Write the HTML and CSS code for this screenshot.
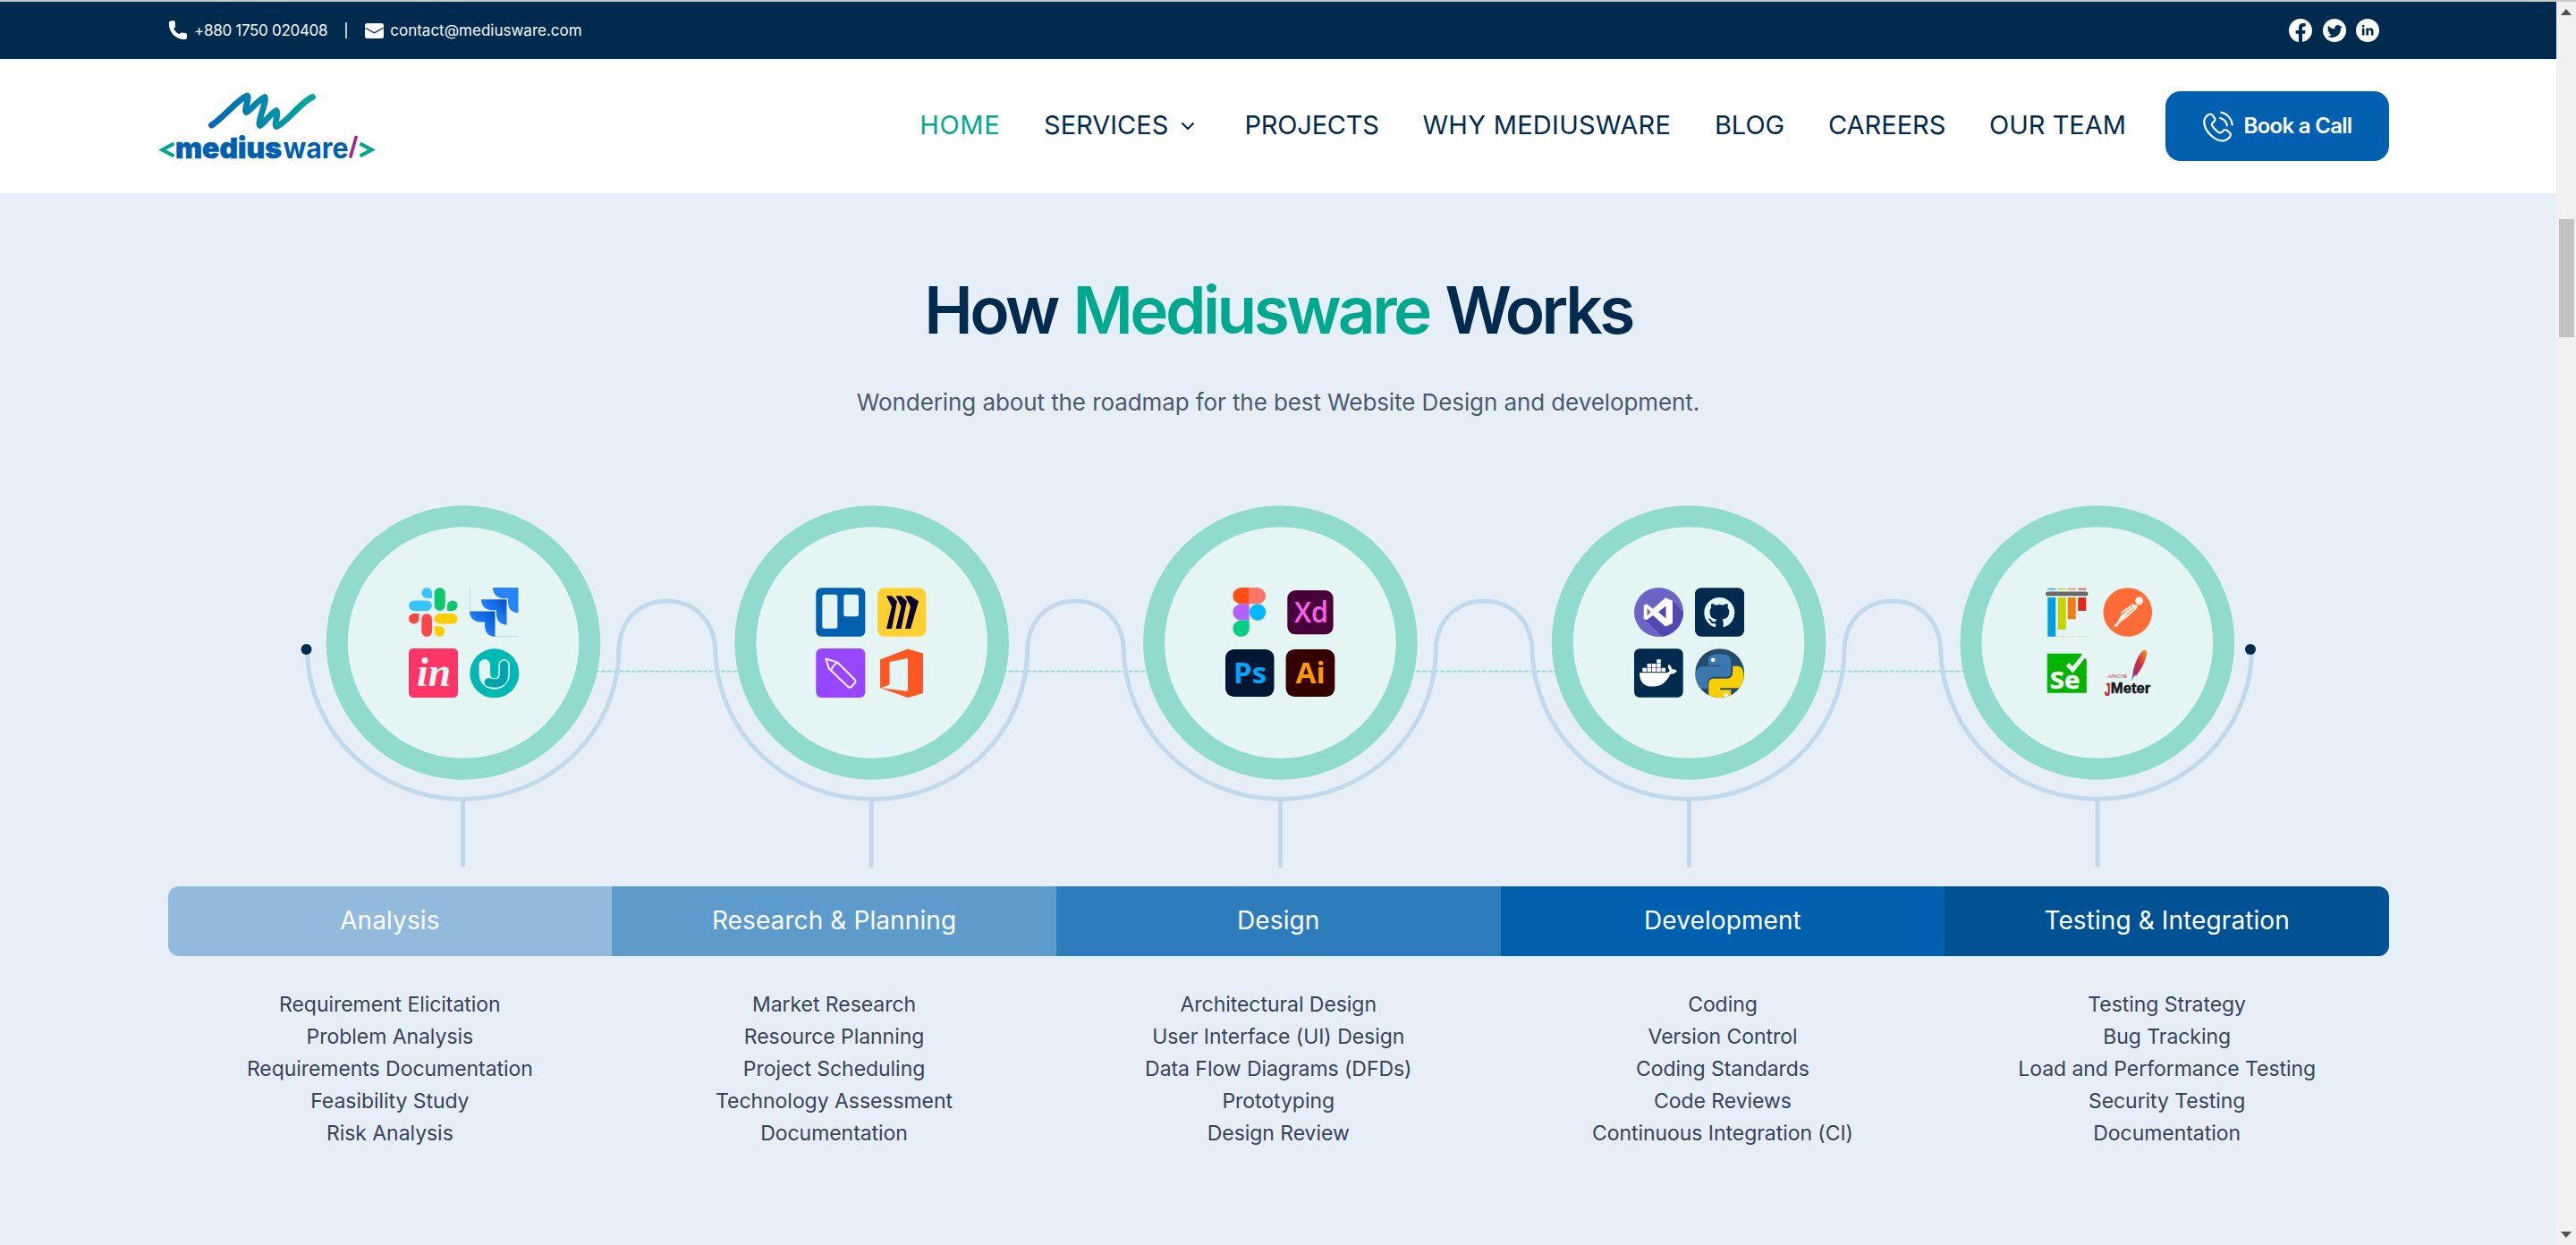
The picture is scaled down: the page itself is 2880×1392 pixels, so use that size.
FILE: index.html
```html
<!DOCTYPE html>
<html lang="en">
<head>
<meta charset="utf-8">
<title>Mediusware</title>
<link rel="stylesheet" href="styles.css">
</head>
<body>
<div class="window">
<div class="page">
  <div class="topbar">
    <div class="contacts">
      <svg class="icon-phone" viewBox="0 0 22 22"><path fill="#fff" d="M1 2Q.8.7 3 .4L6 0Q7.500 0 7.700 2L8 6.500Q8 8 6 9Q8 13 12.500 15.300Q13.500 13.500 15 13.600L19.500 14Q21 14.200 21 16V19Q21 20.800 19 21C8 21.500 0 12 1 2Z"/></svg>
      <span class="phone">+880 1750 020408</span>
      <span class="divider"></span>
      <svg class="icon-mail" viewBox="0 0 21 17"><rect width="21" height="17" rx="2.500" fill="#fff"/><path d="M.5 5.200 10.500 10.800 20.500 5.200" fill="none" stroke="#002b4e" stroke-width="1.300"/></svg>
      <span class="mail">contact@mediusware.com</span>
    </div>
    <div class="socials">
      <svg viewBox="0 0 16 16"><path fill="#fff" d="M16 8.049c0-4.446-3.582-8.050-8-8.050C3.580 0-.002 3.603-.002 8.050c0 4.017 2.926 7.347 6.750 7.951v-5.625h-2.030V8.050H6.750V6.275c0-2.017 1.195-3.131 3.022-3.131.876 0 1.791.157 1.791.157v1.980h-1.009c-.993 0-1.303.621-1.303 1.258v1.510h2.218l-.354 2.326H9.250V16c3.824-.604 6.750-3.934 6.750-7.951"/></svg>
      <svg viewBox="0 0 16 16"><circle cx="8" cy="8" r="8" fill="#fff"/><path transform="translate(3 3.100) scale(.65)" fill="#002b4e" d="M5.026 15c6.038 0 9.341-5.003 9.341-9.334q.002-.211-.006-.422A6.700 6.700 0 0 0 16 3.542a6.700 6.700 0 0 1-1.889.518 3.300 3.300 0 0 0 1.447-1.817 6.500 6.500 0 0 1-2.087.793A3.286 3.286 0 0 0 7.875 6.030a9.320 9.320 0 0 1-6.767-3.429 3.290 3.290 0 0 0 1.018 4.382A3.300 3.300 0 0 1 .64 6.575v.045a3.290 3.290 0 0 0 2.632 3.218 3.200 3.200 0 0 1-.865.115 3 3 0 0 1-.614-.057 3.280 3.280 0 0 0 3.067 2.277A6.600 6.600 0 0 1 .78 13.580a6 6 0 0 1-.78-.045A9.340 9.340 0 0 0 5.026 15"/></svg>
      <svg viewBox="0 0 16 16"><circle cx="8" cy="8" r="8" fill="#fff"/><path fill="#002b4e" d="M4.200 6.500H5.800V11.400H4.200ZM5 4.100a.9.900 0 1 1 0 1.800a.9.900 0 1 1 0-1.800ZM7 6.500H8.500V7.200C9.400 5.900 12 6 12 8.500V11.400H10.400V8.800C10.400 7.300 8.600 7.400 8.600 8.800V11.400H7Z"/></svg>
    </div>
  </div>

  <header class="header">
    <svg class="logo" viewBox="0 -4 242 90">
      <defs><linearGradient id="mark" gradientUnits="userSpaceOnUse" x1="56" y1="0" x2="175" y2="0"><stop offset="0" stop-color="#0066b6"/><stop offset="1" stop-color="#00ab9f"/></linearGradient></defs>
      <path fill="none" stroke="url(#mark)" stroke-width="6.800" stroke-linecap="round" stroke-linejoin="round" d="M58.500 40C72 32 86 12 98.500 7C101.500 9 94 24 97.500 25.500C103 23 110 12 118 8.500C121 12 109 38 112.500 40.500C117 39 124 27 131 23.500C134 26 128 40 131 41.500C142 38 158 14 171.500 8.500"/>
      <g font-family="Inter, sans-serif" font-size="32">
        <path d="M16.500 60.500 3.500 67.500 16.500 74.500" fill="none" stroke="#00a88f" stroke-width="4.200"/>
        <text x="18" y="76.500" font-weight="900" fill="#005fb0" stroke="#005fb0" stroke-width=".6" textLength="119" lengthAdjust="spacingAndGlyphs">medius</text>
        <text x="138.500" y="76.500" font-weight="700" fill="#005fb0" textLength="73" lengthAdjust="spacingAndGlyphs">ware</text>
        <path d="M213.500 76.500 220.500 52" fill="none" stroke="#a02890" stroke-width="3.600"/>
        <path d="M224.500 60.500 237.500 67.500 224.500 74.500" fill="none" stroke="#00a88f" stroke-width="4.200"/>
      </g>
    </svg>
    <nav class="nav">
      <a class="active">HOME</a>
      <a class="has-menu">SERVICES<svg viewBox="0 0 16 10"><path d="M1.500 1.500 8 8 14.500 1.500" fill="none" stroke="#002b4e" stroke-width="2.200"/></svg></a>
      <a class="projects">PROJECTS</a>
      <a class="why">WHY MEDIUSWARE</a>
      <a>BLOG</a>
      <a>CAREERS</a>
      <a>OUR TEAM</a>
    </nav>
    <a class="call">
      <svg viewBox="0 0 34 35"><g fill="none" stroke="#fff" stroke-width="2.200" stroke-linecap="round" stroke-linejoin="round"><path d="M8.500 3.500C5.500 3.500 1.200 7.500 1.200 12C1.200 22 12.500 33.500 22 33.500C26.500 33.500 31 29 31 26.500C31 25 26.500 21 24.500 21C22.500 21 21.500 24.500 19.500 24.500C16.500 24.500 9.800 17.500 9.800 15C9.800 13 13.500 12.200 13.500 10C13.500 8 10 3.500 8.500 3.500Z"/><path d="M19 8C23.500 9 26 12 27 16.500M20 1.500C27 3 31.500 8 32.800 15.500"/></g></svg>
      <span>Book a Call</span>
    </a>
  </header>

  <main class="works">
    <h1>How <em>Mediusware</em> Works</h1>
    <p class="lead">Wondering about the roadmap for the best Website Design and development.</p>

    <svg class="roadmap" viewBox="0 560 2858 431">
      <defs>
        <linearGradient id="jira" x1="1" y1="0" x2=".35" y2=".65"><stop offset="0" stop-color="#0050c8"/><stop offset="1" stop-color="#2684ff"/></linearGradient>
        <linearGradient id="feather" x1="1" y1="0" x2="0" y2="1"><stop offset="0" stop-color="#f7a11b"/><stop offset=".45" stop-color="#d02a40"/><stop offset="1" stop-color="#7a3a98"/></linearGradient>
        <clipPath id="disc"><circle cx="27.500" cy="27.500" r="27.500"/></clipPath>
      </defs>
      <path d="M518 750.700H2345" stroke="#8fdccb" stroke-width="1.800" stroke-dasharray="5 1.700"/>
      <g fill="none" stroke="#c2d9ec" stroke-width="5">
        <path d="M343.500 727C345 822 424 893.500 518 893.500C612 893.500 692 822 692 724C694 692 716 672 745.700 672C775 672 797 692 799.500 724C801 822 881 893.500 974.700 893.500C1069 893.500 1148.700 822 1148.700 724C1150.700 692 1172.700 672 1202.400 672C1231.700 672 1253.700 692 1256.200 724C1257.700 822 1337.700 893.500 1431.400 893.500C1525.700 893.500 1605.400 822 1605.400 724C1607.400 692 1629.400 672 1659.100 672C1688.400 672 1710.400 692 1712.900 724C1714.400 822 1794.400 893.500 1888.100 893.500C1982.400 893.500 2062.100 822 2062.100 724C2064.100 692 2086.100 672 2115.800 672C2145.100 672 2167.100 692 2169.600 724C2171.100 822 2251.100 893.500 2344.800 893.500C2438 893.500 2516 822 2517.500 727"/>
        <path stroke-linecap="round" d="M517.500 895V967.500M974 895V967.500M1431.500 895V967.500M1888.500 895V967.500M2345 895V967.500"/>
      </g>
      <circle cx="342.500" cy="726" r="6" fill="#002b4e"/><circle cx="2516" cy="726" r="6" fill="#002b4e"/>
      <g fill="#e5f5f4" stroke="#90dbce" stroke-width="24">
        <circle cx="518" cy="718.500" r="141.300"/><circle cx="974.700" cy="718.500" r="141.300"/><circle cx="1431.400" cy="718.500" r="141.300"/><circle cx="1888.100" cy="718.500" r="141.300"/><circle cx="2344.800" cy="718.500" r="141.300"/>
      </g>

      <!-- Slack -->
      <g transform="translate(457 657)">
        <path fill="#36c5ff" d="M26 11.700H20.100A5.850 5.850 0 1 1 26 5.850ZM5.800 14.600H20.200a5.700 5.700 0 0 1 0 11.400H5.800a5.700 5.700 0 0 1 0-11.400Z"/>
        <path fill="#10c66f" d="M28.700 6a6 6 0 0 1 12 0V20a6 6 0 0 1-12 0ZM43 26V20.300A5.800 5.800 0 1 1 48.800 26Z"/>
        <path fill="#ff4545" d="M11.500 29V34.700A5.750 5.750 0 1 1 5.750 29ZM14.300 35a5.850 5.850 0 0 1 11.700 0V49a5.850 5.850 0 0 1-11.700 0Z"/>
        <path fill="#fc0" d="M34.400 29H48.800a5.700 5.700 0 0 1 0 11.500H34.400a5.700 5.700 0 0 1 0-11.500ZM28.700 43.300H34.500A5.750 5.750 0 1 1 28.700 49Z"/>
      </g>
      <!-- Jira -->
      <g transform="translate(525 657)">
        <path d="M.5 0V26M28 54.500H54.500" stroke="#b5d8f2" stroke-width="1"/>
        <path fill="#2684ff" d="M26 0H54.500V28.500C47 28 43 23 43 16V12H38C31 12 26 7 26 0Z"/>
        <path transform="translate(-13 13.300)" fill="url(#jira)" d="M26 0H54.500V28.500C47 28 43 23 43 16V12H38C31 12 26 7 26 0Z"/>
        <path transform="translate(-26 26.500)" fill="url(#jira)" d="M26 0H54.500V28.500C47 28 43 23 43 16V12H38C31 12 26 7 26 0Z"/>
      </g>
      <!-- InVision -->
      <g transform="translate(457 725)"><rect width="55" height="55" rx="5" fill="#ff3568"/><text x="9" y="42" textLength="38" lengthAdjust="spacingAndGlyphs" font-family="Liberation Serif, serif" font-style="italic" font-weight="700" font-size="46" fill="#e5f5f4">in</text></g>
      <!-- UpLabs -->
      <g transform="translate(525.300 725.300)" fill="none" stroke-linecap="round"><circle cx="27.500" cy="27.500" r="27.500" fill="#00b9b3"/><path stroke="#e5f5f4" stroke-width="12.500" d="M16.500 18V28C16.500 43 38.300 43 38.300 28V18"/><path stroke="#00b9b3" stroke-width="9.500" d="M38.300 18V28C38.300 39 30 40 21 37.500"/><path stroke="#00a3a8" stroke-width="8" d="M38.300 18V28C38.300 39 30 40 21 37.500"/></g>
      <!-- Trello -->
      <g transform="translate(912.300 657.300)"><rect width="55" height="54.500" rx="6" fill="#0060b0"/><rect x="7" y="7.500" width="17" height="38" rx="2.500" fill="#e5f5f4"/><rect x="31" y="7.500" width="16.700" height="24.500" rx="2.500" fill="#e5f5f4"/></g>
      <!-- Miro -->
      <g transform="translate(981 657.300)"><rect width="54.500" height="54.500" rx="8" fill="#ffd02f"/><path fill="#0a0038" d="M10 9H16L22 15 16 45.700H10L16 21ZM20.500 9H26.500L33 15 26.500 45.700H20.500L26.500 21ZM31 9H37L46 15 37 45.700H31L37 21Z"/></g>
      <!-- Pencil -->
      <g transform="translate(912.300 725)"><rect width="55" height="55" rx="6" fill="#9747ff"/><path fill="none" stroke="#eee5fb" stroke-width="2.300" stroke-linejoin="round" d="M11 11.500 24 15.500 43 34.500Q45 37 43 39L40 42.500Q38 44.500 35.500 42.500L14.500 22.500ZM24 16Q19 18 17 24.500"/></g>
      <!-- Office -->
      <path transform="translate(984 725.600)" fill="#ff5722" d="M0 12 31 0 48 5V49.500L31 54.500 0 43.500 31 47.500V10.500L10.500 14.500V40L0 44Z"/>
      <!-- Figma -->
      <g transform="translate(1378.300 657)"><path fill="#ff4f17" d="M18.400 0V18.300H9.200A9.150 9.150 0 0 1 9.200 0Z"/><path fill="#ff7565" d="M18.400 0H27.600A9.150 9.150 0 0 1 27.600 18.300H18.400Z"/><path fill="#b560ff" d="M18.400 18.300V36.600H9.200A9.150 9.150 0 0 1 9.200 18.300Z"/><circle cx="27.800" cy="27.500" r="9.200" fill="#00b8ff"/><path fill="#00cf84" d="M18.400 36.600V45.700A9.200 9.200 0 1 1 9.200 36.600Z"/></g>
      <g font-family="Open Sans, sans-serif" font-size="33" font-weight="700">
        <!-- Adobe XD, Photoshop, Illustrator -->
        <rect x="1439.300" y="660" width="51.300" height="49.300" rx="9" fill="#470137"/><text x="1447" y="696" font-weight="600" textLength="38" lengthAdjust="spacingAndGlyphs" fill="#ff5cf2">Xd</text>
        <rect x="1370" y="726" width="54.500" height="53" rx="9.500" fill="#001733"/><text x="1379" y="763.700" textLength="37" lengthAdjust="spacingAndGlyphs" fill="#00a5ff">Ps</text>
        <rect x="1437.600" y="726" width="54.700" height="53" rx="9.500" fill="#340000"/><text x="1448.600" y="763.700" textLength="33" lengthAdjust="spacingAndGlyphs" fill="#ff9a00">Ai</text>
      </g>
      <!-- Visual Studio -->
      <g transform="translate(1827 657)"><g clip-path="url(#disc)"><rect width="55" height="55" fill="#6d65c6"/><path fill="#5148b0" d="M43 15 55 27V55H32L12 36 25 28Z"/></g><path fill="#fff" fill-rule="evenodd" d="M35 11.300 43 14.800V40L35 43.500 21 31 14 36.300 10.700 34.700V20L14 18.300 21 23.700ZM14.500 23V31.700L18.500 27.300ZM35.500 20.500 27 27.300 35.500 34.500Z"/></g>
      <!-- GitHub -->
      <g transform="translate(1895 657.300)"><rect width="55" height="54.500" rx="7" fill="#002b4e"/><path transform="translate(10.300 10.600) scale(2.130)" fill="#e5f5f4" d="M8 0C3.580 0 0 3.580 0 8c0 3.540 2.290 6.530 5.470 7.590.4.070.55-.17.55-.38 0-.19-.01-.82-.01-1.490-2.010.37-2.530-.49-2.690-.94-.09-.23-.48-.94-.82-1.130-.28-.15-.68-.52-.01-.53.63-.01 1.080.58 1.230.82.72 1.210 1.870.87 2.330.66.070-.52.280-.87.510-1.070-1.780-.2-3.640-.89-3.640-3.950 0-.87.310-1.590.820-2.150-.08-.2-.36-1.020.080-2.120 0 0 .67-.21 2.200.820.64-.18 1.320-.27 2-.27.680 0 1.360.090 2 .27 1.530-1.040 2.200-.82 2.200-.82.440 1.100.160 1.920.080 2.120.510.560.820 1.270.820 2.150 0 3.070-1.870 3.750-3.650 3.950.290.250.540.730.540 1.480 0 1.070-.01 1.930-.01 2.200 0 .21.150.460.550.380A8.013 8.013 0 0 0 16 8c0-4.420-3.580-8-8-8z"/></g>
      <!-- Docker -->
      <g transform="translate(1827 725.300)" fill="#fff"><rect width="54.700" height="54.500" rx="6" fill="#002b4e"/><path d="M6 27H36Q40 26 39.500 24Q36.500 20 39 17.500Q42 20 42.500 23Q46 22.500 48 25Q45 28.500 40.500 28.500C36 38 30 42.300 20 42.300C9 42.300 6 35 6 27ZM9.300 21.500h4.600v4.500h-4.600ZM14.600 21.500h4.600v4.500h-4.600ZM19.900 21.500h4.600v4.500h-4.600ZM25.200 21.500h4.600v4.500h-4.600ZM30.500 21.500h4.600v4.500h-4.600ZM14.600 16.700h4.600v4.200h-4.600ZM19.900 16.700h4.600v4.200h-4.600ZM25.200 16.700h4.600v4.200h-4.600ZM25.200 12h4.600v4.100h-4.600Z"/></g>
      <!-- Python -->
      <g transform="translate(1895.200 725.200)"><g clip-path="url(#disc)"><rect width="55" height="55" fill="#264b70"/><path fill="#3c78b0" d="M15 12Q15 6 27 6Q40 6 40 13V26Q40 31.500 34 31.500H21Q14 31.500 14 39V44.500H6Q0 44 0 32Q0 20 8 20H27V18.500H15Z"/><path fill="#f8cf00" d="M42 19.500H48Q54.500 20 54.500 32Q54.500 44 48 44H28V46H40V52Q40 58 27 58Q15 58 15 50V40Q15 33.500 21 33.500H35Q42 33.500 42 26Z"/><circle cx="20" cy="12.500" r="2.300" fill="#fff"/><circle cx="34.500" cy="52" r="2.300" fill="#fff"/></g></g>
      <!-- Pytest -->
      <g transform="translate(2287 657)"><g opacity=".6"><path fill="#009fe3" d="M2.300.5h9v2.300h-9Z"/><path fill="#c7d301" d="M13.700.5h9v2.300h-9Z"/><path fill="#f07e16" d="M24.700.5h9v2.300h-9Z"/><path fill="#df2815" d="M36.300.5h9v2.300h-9Z"/></g><rect y="4.500" width="47.500" height="4.700" rx="2.300" fill="#696969"/><path fill="#009fe3" d="M2.300 11h9V54.700h-9Z"/><path fill="#c7d301" d="M13.700 11h9V47h-9Z"/><path fill="#f07e16" d="M24.700 11h9V35.300h-9Z"/><path fill="#df2815" d="M36.300 11h9V26h-9Z"/><path opacity=".35" fill="#d98a50" d="M13.700 54h9v.8h-9ZM24.700 54h9v.8h-9ZM36.300 54h9v.8h-9Z"/></g>
      <!-- Postman -->
      <g transform="translate(2351.500 657)"><circle cx="27.300" cy="27.500" r="27.300" fill="#ff6c37"/><g fill="#fdeee8"><circle cx="40.200" cy="14.800" r="4.600"/><path d="M32.500 18.500 38.500 19.500Q38.500 24 35 25.500L27 33 20 38 16.500 41.500Q17 43 15.500 43.500L11 43.300 15.500 39 20 30.500 26 27.500 19.500 29 20 27Z"/></g><path d="M21 29 33 21M25 31 35 23" stroke="#ff6c37" stroke-width=".8"/></g>
      <!-- Selenium -->
      <g transform="translate(2288.800 730.700)"><path fill="#00b400" d="M0 0H38L44 7V44H0Z"/><path d="M22.500 12 28.500 18 43 0" fill="none" stroke="#effaf3" stroke-width="5"/><text x="3" y="39.300" textLength="33.500" lengthAdjust="spacingAndGlyphs" font-family="Open Sans, sans-serif" font-size="27" font-weight="700" fill="#fff" stroke="#fff" stroke-width=".5">Se</text></g>
      <!-- JMeter -->
      <g transform="translate(2351.500 725.300)"><path fill="url(#feather)" d="M33 29C33 22 38 8 44.500 2Q48 0 48.800 4C48.500 13 41 25 37.500 29.500L34.500 30.500 31.500 36Z"/><text x="5" y="32.800" textLength="22" lengthAdjust="spacingAndGlyphs" font-family="Liberation Sans, sans-serif" font-style="italic" font-size="4.500" fill="#d04050">APACHE</text><text x="1.500" y="52.300" font-family="Liberation Sans, sans-serif" font-weight="700" font-size="20" fill="#cc2233" stroke="#cc2233" stroke-width=".5" textLength="6.500" lengthAdjust="spacingAndGlyphs">J</text><text x="8.300" y="49.600" font-family="Liberation Sans, sans-serif" font-weight="700" font-size="17" fill="#151515" stroke="#151515" stroke-width=".5" textLength="44.500" lengthAdjust="spacingAndGlyphs">Meter</text></g>
    </svg>

    <div class="phases">
      <section class="phase analysis"><h2>Analysis</h2><ul><li>Requirement Elicitation</li><li>Problem Analysis</li><li>Requirements Documentation</li><li>Feasibility Study</li><li>Risk Analysis</li></ul></section>
      <section class="phase research"><h2>Research &amp; Planning</h2><ul><li>Market Research</li><li>Resource Planning</li><li>Project Scheduling</li><li>Technology Assessment</li><li>Documentation</li></ul></section>
      <section class="phase design"><h2>Design</h2><ul><li>Architectural Design</li><li>User Interface (UI) Design</li><li>Data Flow Diagrams (DFDs)</li><li>Prototyping</li><li>Design Review</li></ul></section>
      <section class="phase development"><h2>Development</h2><ul><li>Coding</li><li>Version Control</li><li>Coding Standards</li><li>Code Reviews</li><li>Continuous Integration (CI)</li></ul></section>
      <section class="phase testing"><h2>Testing &amp; Integration</h2><ul><li>Testing Strategy</li><li>Bug Tracking</li><li>Load and Performance Testing</li><li>Security Testing</li><li>Documentation</li></ul></section>
    </div>
  </main>
</div>
<div class="scrollbar">
  <svg viewBox="0 0 12 7"><path d="M0 7 6 0 12 7Z" fill="#505050"/></svg>
  <div class="track"><div class="thumb"></div></div>
  <svg viewBox="0 0 12 7"><path d="M0 0 6 7 12 0Z" fill="#505050"/></svg>
</div>
</div>
</body>
</html>
```
FILE: styles.css
```css
* { box-sizing: border-box; }

body {
  margin: 0;
  font-family: Inter, sans-serif;
  color: #002b4e;
}

.window {
  display: flex;
  height: 1392px;
  border-top: 2px solid #c6c8ca;
  overflow: hidden;
}

.page { flex: 1; display: flex; flex-direction: column; }

.topbar {
  height: 64px;
  padding: 0 198px 0 188px;
  display: flex;
  align-items: center;
  justify-content: space-between;
  background: #002b4e;
  color: #f6f8fa;
  font-size: 17px;
}
.contacts { display: flex; align-items: center; }
.icon-phone { width: 22px; height: 22px; margin-right: 7px; }
.icon-mail { width: 21px; height: 17px; margin-right: 7.5px; }
.phone { letter-spacing: -0.3px; }
.divider { width: 2px; height: 18px; margin: 0 20px 0 19.5px; background: #b9cdd5; }
.socials { display: flex; gap: 11.5px; }
.socials svg { width: 26px; height: 26px; }

.header {
  height: 150px;
  padding: 0 187px 0 178px;
  display: flex;
  align-items: center;
  background: #fff;
}
.logo { width: 242px; height: 90px; margin-right: auto; }
.nav { display: flex; gap: 48.7px; margin-right: 44px; padding-bottom: 3px; }
.nav a { font-size: 29px; line-height: 36px; white-space: nowrap; }
.nav .active { color: #00a88f; letter-spacing: 0.7px; }
.nav .has-menu { display: flex; align-items: center; gap: 14px; margin-right: 6.5px; }
.nav .has-menu svg { width: 16px; height: 10px; margin-top: 3px; }
.nav .projects { letter-spacing: -0.2px; }
.nav .why { letter-spacing: 0.3px; }

.call {
  width: 250px;
  height: 78px;
  display: flex;
  align-items: center;
  justify-content: center;
  gap: 12px;
  border-radius: 17px;
  background: #0060b0;
  color: #fff;
  font-size: 24px;
  font-weight: 600;
  letter-spacing: -0.7px;
}
.call svg { width: 34px; height: 35px; }
.call span { padding-bottom: 2px; }

.works {
  flex: 1;
  display: flex;
  flex-direction: column;
  background: #e6eff8;
}
h1 {
  margin: 86px 0 0;
  text-align: center;
  font-size: 73px;
  line-height: 90px;
  font-weight: 600;
  letter-spacing: -3.55px;
  word-spacing: 3px;
}
h1 em { font-style: normal; color: #00a88f; }
.lead {
  margin: 40px 0 0;
  text-align: center;
  font-size: 26px;
  line-height: 36px;
  letter-spacing: -0.09px;
  color: #4a5a6d;
}
.roadmap { display: block; width: 2858px; height: 431px; margin-top: 92px; }

.phases {
  display: grid;
  grid-template-columns: repeat(5, 1fr);
  margin: 0 187px 0 187.5px;
}
.phase { text-align: center; }
.phase h2 {
  margin: 0;
  padding-bottom: 2px;
  font-size: 28px;
  line-height: 76px;
  font-weight: 400;
  letter-spacing: 0.1px;
  color: #fff;
}
.analysis h2 { background: #91badd; border-radius: 12px 0 0 12px; }
.research h2 { background: #5d9bcd; }
.design h2 { background: #2d7dbd; }
.development h2 { background: #0060b0; }
.testing h2 { background: #005294; border-radius: 0 12px 12px 0; }
.phase ul {
  margin: 0;
  padding: 36px 0 0;
  list-style: none;
  font-size: 23px;
  line-height: 36px;
  letter-spacing: -0.05px;
  color: #364358;
}

.scrollbar {
  width: 22px;
  padding: 8px 0;
  display: flex;
  flex-direction: column;
  align-items: center;
  background: #f1f1f1;
}
.scrollbar svg { width: 12px; height: 7px; }
.track { flex: 1; padding-top: 228px; }
.thumb { width: 17px; height: 132px; background: #c1c1c1; }
```
